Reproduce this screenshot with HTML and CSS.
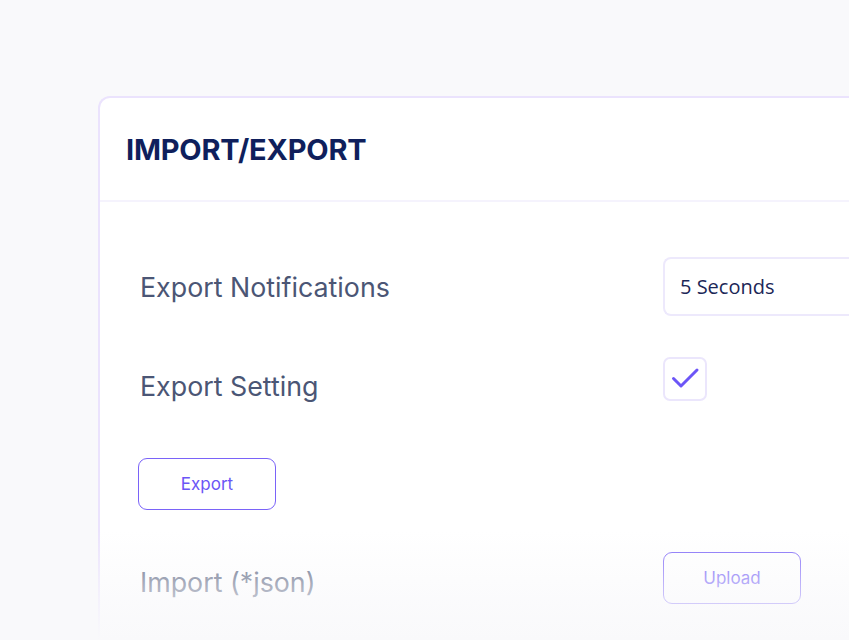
FILE: index.html
```html
<!DOCTYPE html>
<html lang="en">
<head>
<meta charset="utf-8">
<title>Import/Export</title>
<link rel="stylesheet" href="styles.css">
</head>
<body>
<div class="page">
  <section class="card">
    <header class="card-head">
      <h1 class="title">IMPORT/EXPORT</h1>
    </header>
    <div class="card-body">
      <div class="row row-select">
        <span class="label">Export Notifications</span>
        <div class="select">5 Seconds</div>
      </div>
      <div class="row row-check">
        <span class="label label-low">Export Setting</span>
        <div class="checkbox">
          <svg width="44" height="44" viewBox="0 0 44 44"><path d="M10.5 21.5 L18 29 L34 13" fill="none" stroke="#6c55f7" stroke-width="3" stroke-linecap="round" stroke-linejoin="round"/></svg>
        </div>
      </div>
      <button class="btn btn-export">Export</button>
      <div class="row row-import">
        <span class="label label-import">Import (*json)</span>
        <button class="btn">Upload</button>
      </div>
    </div>
    <div class="fade"></div>
  </section>
</div>
</body>
</html>
```

FILE: styles.css
```css
html, body {
  margin: 0;
  padding: 0;
  height: 100%;
  overflow: hidden;
  background: #f9f9fb;
}
.page {
  padding: 96px 0 0 98px;
  height: 640px;
  box-sizing: border-box;
  position: relative;
  overflow: hidden;
}
.card {
  width: 751px;
  height: 544px;
  background: #ffffff;
  border: 2px solid #ebe3fd;
  border-right: none;
  border-bottom: none;
  border-radius: 12px 0 0 0;
  box-sizing: border-box;
  overflow: hidden;
}
.card-head {
  height: 104px;
  display: flex;
  align-items: center;
  padding-left: 26px;
  box-sizing: border-box;
  border-bottom: 2px solid #f5f3fd;
}
.title {
  margin: 0;
  font-family: Inter, "Liberation Sans", sans-serif;
  font-weight: 700;
  font-size: 29px;
  color: #0f1f5c;
  letter-spacing: -0.2px;
}
.card-body {
  padding: 55px 0 0 38px;
  display: flex;
  flex-direction: column;
  align-items: flex-start;
}
.row {
  display: flex;
  align-items: center;
}
.label {
  width: 525px;
  flex-shrink: 0;
  padding-left: 2px;
  box-sizing: border-box;
  font-family: Inter, "Liberation Sans", sans-serif;
  font-size: 26.8px;
  color: #4b5675;
}
.row-select {
  height: 59px;
}
.select {
  width: 200px;
  height: 59px;
  box-sizing: border-box;
  border: 2px solid #ede9fc;
  border-right: none;
  border-radius: 8px 0 0 8px;
  display: flex;
  align-items: center;
  padding-left: 15px;
  font-family: "Open Sans", Inter, sans-serif;
  font-size: 20px;
  color: #1c2757;
}
.row-check {
  margin-top: 41px;
  height: 44px;
}
.label-low {
  padding-top: 13px;
}
.checkbox {
  width: 44px;
  height: 44px;
  box-sizing: border-box;
  border: 2px solid #ebe6fc;
  border-radius: 7px;
  position: relative;
}
.checkbox svg {
  position: absolute;
  left: -2px;
  top: -2px;
}
.btn {
  width: 138px;
  height: 52px;
  box-sizing: border-box;
  background: #ffffff;
  border: 1.5px solid #7a63f8;
  border-radius: 9px;
  font-family: Inter, "Liberation Sans", sans-serif;
  font-size: 17px;
  color: #6b56f6;
  padding: 0;
}
.btn-export {
  margin-top: 57px;
}
.row-import {
  margin-top: 42px;
  height: 52px;
}
.label-import {
  padding-top: 8px;
}
.fade {
  position: absolute;
  left: 0;
  right: 0;
  top: 530px;
  height: 110px;
  background: linear-gradient(to bottom, rgba(249, 249, 251, 0) 0%, rgba(249, 249, 251, 0.55) 50%, rgba(249, 249, 251, 1) 100%);
  pointer-events: none;
}
```
